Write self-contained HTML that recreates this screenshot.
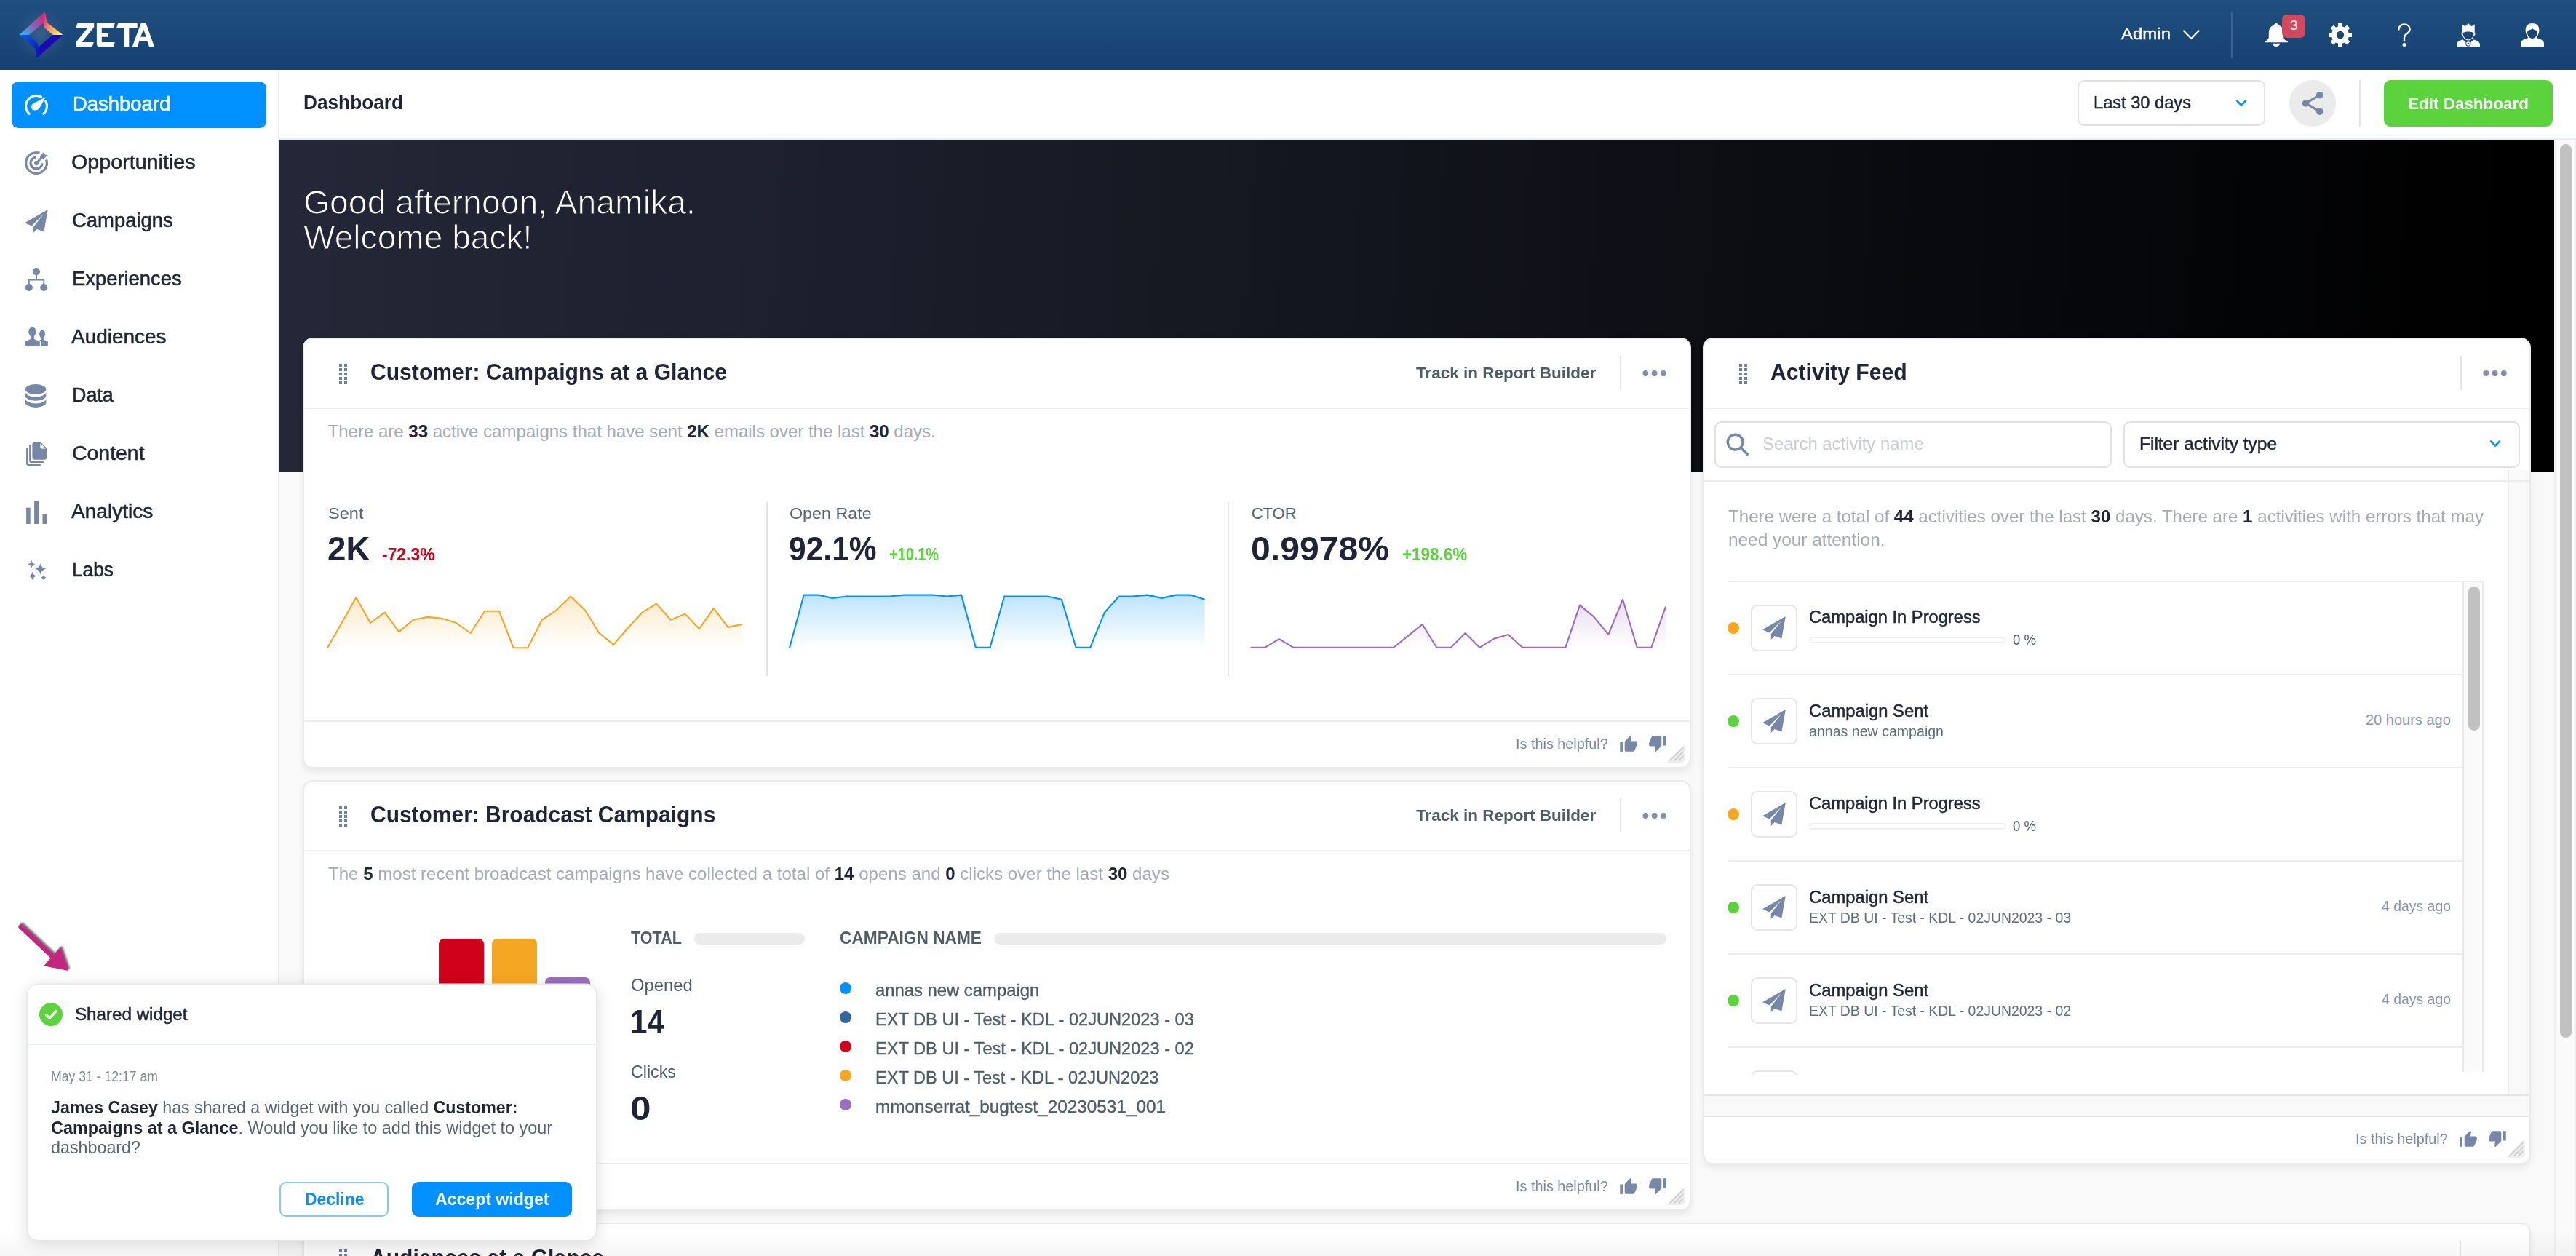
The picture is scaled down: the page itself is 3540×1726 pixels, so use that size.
<!DOCTYPE html>
<html><head><meta charset="utf-8"><title>Dashboard</title>
<style>
html,body{margin:0;padding:0;width:3540px;height:1726px;overflow:hidden}
body{position:relative;background:#f9f9f9;font-family:"Liberation Sans",sans-serif}
#root{position:absolute;left:0;top:0;width:3540px;height:1726px;overflow:hidden;background:#f9f9f9}
.t{position:absolute;white-space:nowrap;transform-origin:0 0}
.a{position:absolute}
.card{position:absolute;box-sizing:border-box;background:#fff;border-radius:14px;border:2px solid #ebebeb;box-shadow:0 5px 9px rgba(0,0,0,.07)}
.hl{position:absolute;height:2px;background:#ededed}
.vl{position:absolute;width:2px;background:#e6e6e6}
.dot{position:absolute;border-radius:50%}
svg{position:absolute;overflow:visible}
</style></head><body><div id="root">

<div class="a" style="left:0;top:96px;width:382px;height:1630px;background:#fff"></div>
<div class="a" style="left:382px;top:96px;width:2px;height:1630px;background:#efefef"></div>
<div class="a" style="left:384px;top:192px;width:3126px;height:456px;background:linear-gradient(93deg,#232737 0%,#1c1f2b 25%,#12141c 50%,#08090d 75%,#000 97%)"></div>
<div class="a" style="left:384px;top:96px;width:3156px;height:93px;background:#fff"></div>
<div class="a" style="left:384px;top:189px;width:3156px;height:3px;background:#eaeef0"></div>
<div class="a" style="left:3510px;top:192px;width:30px;height:1534px;background:#fafafa;box-shadow:inset 2px 0 0 #f0f0f0,inset -2px 0 0 #f0f0f0"></div>
<div class="a" style="left:3518px;top:198px;width:16px;height:1228px;background:#c1c1c1;border-radius:8px"></div>
<div class="a" style="left:0;top:0;width:3540px;height:96px;background:linear-gradient(180deg,#20507f 0%,#1a4878 50%,#164172 100%)"></div>
<svg style="left:0;top:0" width="240" height="96" viewBox="0 0 240 96">
<defs>
<linearGradient id="lg1" x1="26" y1="47" x2="62" y2="25" gradientUnits="userSpaceOnUse"><stop offset="0" stop-color="#17c6ff"/><stop offset=".55" stop-color="#8a62b0"/><stop offset="1" stop-color="#d5267c"/></linearGradient>
<linearGradient id="lg2" x1="60" y1="28" x2="84" y2="47" gradientUnits="userSpaceOnUse"><stop offset="0" stop-color="#e03f74"/><stop offset=".5" stop-color="#f0a566"/><stop offset="1" stop-color="#fffa55"/></linearGradient>
<linearGradient id="lg3" x1="27" y1="48" x2="52" y2="72" gradientUnits="userSpaceOnUse"><stop offset="0" stop-color="#0d63d8"/><stop offset="1" stop-color="#0a17c2"/></linearGradient>
<radialGradient id="lgg" cx="56" cy="48" r="36" gradientUnits="userSpaceOnUse"><stop offset="0" stop-color="#5a7fa6" stop-opacity=".42"/><stop offset=".6" stop-color="#4f7298" stop-opacity=".2"/><stop offset="1" stop-color="#4f7298" stop-opacity="0"/></radialGradient>
</defs>
<circle cx="56" cy="48" r="36" fill="url(#lgg)"/>
<polygon points="26.4,47.9 61.7,15.9 59.5,31.4 40,47.9" fill="url(#lg1)"/>
<polygon points="61.7,15.9 64.7,30.8 86.4,47.9 73,47.9 60.8,38.1 59.5,31.4" fill="url(#lg2)"/>
<polygon points="86.4,47.9 50.6,79.7 53,64.8 72.2,47.9" fill="#1a0ab3"/>
<polygon points="26.4,47.9 40,47.9 51.4,58.9 53,64.8 50.6,79.7 48.1,66.3" fill="url(#lg3)"/>
<g fill="#fff">
<polygon points="106.4,31.9 129.2,31.9 129.2,37.3 112.5,57.9 128.8,57.9 126.8,64 104,64 104,58.5 120.7,38.1 104.4,38.1"/>
<path d="M132.9,31.9 H157.8 L155.7,38.1 H139.8 V45.1 H149.6 L148,50.8 H139.8 V57.9 H157.8 L155.7,64 H136.5 Q132.9,64 132.9,60.4 Z"/>
<polygon points="162.3,31.9 188.7,31.9 188.7,38.1 177.3,38.1 177.3,64 170.4,64 170.4,38.1 160.2,38.1"/>
<path d="M193.6,31.9 H200.6 L212,64 H205 L202.6,56.9 H191.2 L188.8,64 H181.8 Z M197.1,40.6 L193.2,50.8 H200.9 Z"/>
</g></svg>
<div class="t" style="left:2915.00px;top:35.75px;font-size:22.5px;line-height:22.5px;-webkit-text-stroke:0.4px;transform:scaleX(1.0661);"><span style="color:#fff;">Admin</span></div>
<svg style="left:2998px;top:38px" width="28" height="20" viewBox="0 0 28 20"><polyline points="3,4.5 13.3,15 23.6,4.5" fill="none" stroke="#fff" stroke-width="2.2" stroke-linecap="round" stroke-linejoin="round"/></svg>
<div class="a" style="left:3066px;top:16px;width:2px;height:64px;background:#3d648f"></div>
<svg style="left:3112px;top:32px" width="32" height="32" viewBox="0 0 32 32"><path fill="#fff" d="M16,0 C17.6,0 18.7,1 19,2.4 C23.6,3.8 26.2,7.8 26.2,12.6 V19 C26.2,21.6 28.6,23.6 32,25.2 V26.2 H0 V25.2 C3.4,23.6 5.8,21.6 5.8,19 V12.6 C5.8,7.8 8.4,3.8 13,2.4 C13.3,1 14.4,0 16,0 Z"/><path fill="#fff" d="M11,27.8 H21 C21,30.2 18.8,32 16,32 C13.2,32 11,30.2 11,27.8 Z"/></svg>
<div class="a" style="left:3136px;top:20px;width:32px;height:32px;border-radius:7px;background:#d1495c"></div>
<div class="t" style="left:3146.60px;top:25.56px;font-size:18px;line-height:18px;transform:scaleX(1.0583);"><span style="color:#fff;">3</span></div>
<svg style="left:3200px;top:32px" width="32" height="32" viewBox="-16 -16 32 32"><g fill="#fff">
<rect x="-3" y="-16" width="6" height="32"/><rect x="-3" y="-16" width="6" height="32" transform="rotate(45)"/><rect x="-3" y="-16" width="6" height="32" transform="rotate(90)"/><rect x="-3" y="-16" width="6" height="32" transform="rotate(135)"/>
<circle r="12"/></g><circle r="5.2" fill="#1a4574"/></svg>
<svg style="left:3294px;top:32px" width="20" height="32" viewBox="0 0 20 32"><path d="M2.4,8.6 C2.4,4.4 5.6,1.4 10,1.4 C14.4,1.4 17.6,4.2 17.6,8.2 C17.6,11.2 15.8,12.8 13.6,14.2 C11.4,15.6 10,16.8 10,19.4 V24" fill="none" stroke="#fff" stroke-width="2.4" stroke-linecap="round"/><circle cx="10" cy="29.4" r="2.5" fill="#fff"/></svg>
<svg style="left:3376px;top:32px" width="32" height="32" viewBox="0 0 32 32"><g fill="#fff">
<path d="M7.3,1.5 L11.6,4.2 L16,0 L20.4,4.2 L24.7,1.5 V15 H7.3 Z"/>
<path d="M6.5,14.5 C6.5,13 7.3,12.7 7.3,12.7 H24.7 C24.7,12.7 25.5,13 25.5,14.5 C25.5,16 24.3,17 23.6,17.6 C22.8,20.4 19.8,23.6 16,23.6 C12.2,23.6 9.2,20.4 8.4,17.6 C7.7,17 6.5,16 6.5,14.5 Z"/>
<path d="M0,32 V29.5 C0,25.5 3.5,23.4 8.6,22.4 L16,29 L23.4,22.4 C28.5,23.4 32,25.5 32,29.5 V32 Z"/>
</g>
<path d="M8.6,14.2 C8.6,12.6 12,11.6 16,11.6 C20,11.6 23.4,12.6 23.4,14.2 C23.4,18 20,22.4 16,22.4 C12,22.4 8.6,18 8.6,14.2 Z" fill="#1a4574"/>
<path d="M9.2,21.6 L16,27.6 L22.8,21.6" fill="none" stroke="#1a4574" stroke-width="1.3"/>
<circle cx="15.9" cy="28" r="3.7" fill="#1a4574"/><circle cx="15.9" cy="28" r="2.75" fill="#fff"/><circle cx="15.9" cy="28" r="1.3" fill="#1a4574"/></svg>
<svg style="left:3464px;top:32px" width="32" height="32" viewBox="0 0 32 32"><g fill="#fff">
<path d="M6.6,9.4 C6.6,3 10.6,0 16,0 C21.4,0 25.4,3 25.4,9.4 C25.4,11.4 25,13.4 24.2,15 C23.6,17.8 20.8,22.4 16,22.4 C11.2,22.4 8.4,17.8 7.8,15 C7,13.4 6.6,11.4 6.6,9.4 Z"/>
<path d="M0,32 V27.6 C0,23.8 4,21.6 11.6,19.8 L16,22 L20.4,19.8 C28,21.6 32,23.8 32,27.6 V32 Z"/></g>
<path d="M9,12.6 C9,10.4 11,9.4 13,9 C14.6,8.6 15.4,7.4 16,7.2 C16.6,7.4 17.4,8.6 19,9 C21,9.4 23,10.4 23,12.6 C23,16.6 20,21 16,21 C12,21 9,16.6 9,12.6 Z" fill="#1a4574"/></svg>
<div class="t" style="left:417.00px;top:126.70px;font-size:28px;line-height:28px;transform:scaleX(0.9368);"><span style="color:#1f2537;font-weight:700;">Dashboard</span></div>
<div class="a" style="left:2854.6px;top:110px;width:254.5px;height:59.4px;border:2px solid #e1e2e3;border-radius:9px;background:#fff"></div>
<div class="t" style="left:2877.00px;top:129.28px;font-size:24px;line-height:24px;-webkit-text-stroke:0.5px;transform:scaleX(0.9846);"><span style="color:#1f2537;">Last 30 days</span></div>
<svg style="left:3070px;top:134px" width="20" height="16" viewBox="0 0 20 16"><polyline points="4,4.4 10,10.6 16,4.4" fill="none" stroke="#0091ff" stroke-width="2.6" stroke-linecap="round" stroke-linejoin="round"/></svg>
<div class="dot" style="left:3146px;top:110px;width:64px;height:64px;background:#ebebeb"></div>
<svg style="left:3146px;top:110px" width="64" height="64" viewBox="0 0 64 64"><g stroke="#7687a8" stroke-width="3" fill="none"><line x1="22.6" y1="31.9" x2="41.8" y2="20.7"/><line x1="22.6" y1="31.9" x2="41.8" y2="43.1"/></g><g fill="#7687a8"><circle cx="41.8" cy="20.7" r="4.8"/><circle cx="22.6" cy="31.9" r="4.8"/><circle cx="41.8" cy="43.1" r="4.8"/></g></svg>
<div class="a" style="left:3242px;top:110px;width:2px;height:64px;background:#e6e6e6"></div>
<div class="a" style="left:3276px;top:110px;width:232px;height:64px;border-radius:9px;background:#5bd33d"></div>
<div class="t" style="left:3309.00px;top:132.07px;font-size:22.6px;line-height:22.6px;transform:scaleX(0.9942);"><span style="color:#fff;font-weight:700;">Edit Dashboard</span></div>
<div class="a" style="left:16px;top:112px;width:350px;height:64px;border-radius:9px;background:#0091ff"></div>
<div class="t" style="left:99.50px;top:129.74px;font-size:27px;line-height:27px;-webkit-text-stroke:0.55px;transform:scaleX(1.0167);"><span style="color:#fff;">Dashboard</span></div>
<div class="t" style="left:98.20px;top:209.74px;font-size:27px;line-height:27px;-webkit-text-stroke:0.55px;transform:scaleX(1.0617);"><span style="color:#1f2537;">Opportunities</span></div>
<div class="t" style="left:98.80px;top:289.74px;font-size:27px;line-height:27px;-webkit-text-stroke:0.55px;transform:scaleX(1.0163);"><span style="color:#1f2537;">Campaigns</span></div>
<div class="t" style="left:98.80px;top:369.74px;font-size:27px;line-height:27px;-webkit-text-stroke:0.55px;transform:scaleX(1.0142);"><span style="color:#1f2537;">Experiences</span></div>
<div class="t" style="left:98.20px;top:449.74px;font-size:27px;line-height:27px;-webkit-text-stroke:0.55px;transform:scaleX(1.0349);"><span style="color:#1f2537;">Audiences</span></div>
<div class="t" style="left:98.80px;top:529.74px;font-size:27px;line-height:27px;-webkit-text-stroke:0.55px;transform:scaleX(0.9957);"><span style="color:#1f2537;">Data</span></div>
<div class="t" style="left:98.80px;top:609.74px;font-size:27px;line-height:27px;-webkit-text-stroke:0.55px;transform:scaleX(1.0531);"><span style="color:#1f2537;">Content</span></div>
<div class="t" style="left:98.20px;top:689.74px;font-size:27px;line-height:27px;-webkit-text-stroke:0.55px;transform:scaleX(1.0403);"><span style="color:#1f2537;">Analytics</span></div>
<div class="t" style="left:98.80px;top:769.74px;font-size:27px;line-height:27px;-webkit-text-stroke:0.55px;transform:scaleX(0.9699);"><span style="color:#1f2537;">Labs</span></div>
<svg style="left:34px;top:128px" width="32" height="32" viewBox="0 0 32 32" fill="#fff" stroke="none"><path d="M6.15,28.43 A14.45,14.45 0 0 1 22.78,5.1 M28.64,10.86 A14.45,14.45 0 0 1 25.86,28.43" fill="none" stroke="#fff" stroke-width="3.1" stroke-linecap="round"/><path d="M28.8,5.2 L12.6,13.7 C9.6,15 8.3,17.8 8.9,20 C9.7,22.7 12.6,23.9 15.2,23.5 C17.8,23.1 19.6,21.6 20.8,19.4 Z" fill="#fff"/></svg>
<svg style="left:34px;top:208px" width="32" height="32" viewBox="0 0 32 32" fill="#7687a8" stroke="none"><path d="M29.64,11.38 A14.4,14.4 0 1 1 20.57,2.34" fill="none" stroke="#7687a8" stroke-width="3.2"/><path d="M23.99,16.42 A8,8 0 1 1 15.86,8" fill="none" stroke="#7687a8" stroke-width="3.25"/><circle cx="16" cy="16.1" r="3.1"/><path d="M16,16 L24,8" stroke="#7687a8" stroke-width="3" fill="none"/><polygon points="21,6.7 26.5,0.6 27.3,4.3 31.3,5.2 25.4,11 22.4,10.6 21.2,9.4"/></svg>
<svg style="left:34px;top:288px" width="32" height="32" viewBox="0 0 32 32" fill="#7687a8" stroke="none"><path d="M31.8,0 L0,18.3 L9.6,22.4 L26.5,5.6 L11.8,24.2 L11.8,32 L16.8,26.9 L26.4,30.4 Z"/></svg>
<svg style="left:34px;top:368px" width="32" height="32" viewBox="0 0 32 32" fill="#7687a8" stroke="none"><circle cx="15.9" cy="5.2" r="5.1"/><circle cx="5.8" cy="27" r="5.1"/><circle cx="26.2" cy="27" r="5.1"/><path d="M15.9,9 V16.4 M5.8,23 V16.4 H26.2 V23" fill="none" stroke="#7687a8" stroke-width="2"/></svg>
<svg style="left:34px;top:448px" width="32" height="32" viewBox="0 0 32 32" fill="#7687a8" stroke="none"><path d="M0.1,27.9 V21.4 L8,18 V14.2 C6.6,13 5.9,11 5.8,9.6 C5,9.2 5,7.8 5.6,7.2 C5.2,4 7.4,2 10.4,2 C13.6,2 15.8,4 15.2,7.2 C15.8,7.8 15.8,9.2 15,9.6 C14.9,11 14.2,13 12.9,14.2 V18 L20.8,21.4 V27.9 Z"/><path d="M22.5,27.9 V20.6 L19.8,19.4 L22.3,18.75 V16.5 C21.2,15.6 20.6,14 20.5,12.8 C19.8,12.4 19.8,11.2 20.3,10.8 C20,8 21.8,6.1 23.8,6.1 C26.4,6.1 28.2,8 27.8,10.8 C28.3,11.2 28.3,12.4 27.6,12.8 C27.5,14 26.9,15.6 25.7,16.5 V18.75 L31.8,21.4 V27.9 Z"/></svg>
<svg style="left:34px;top:528px" width="32" height="32" viewBox="0 0 32 32" fill="#7687a8" stroke="none"><ellipse cx="15.1" cy="7" rx="14.25" ry="7"/><path d="M0.85,10.6 A14.25,7 0 0 0 29.35,10.6 V15.8 A14.25,7 0 0 1 0.85,15.8 Z"/><path d="M0.85,19.6 A14.25,7 0 0 0 29.35,19.6 V24.9 A14.25,7 0 0 1 0.85,24.9 Z"/></svg>
<svg style="left:34px;top:608px" width="32" height="32" viewBox="0 0 32 32" fill="#7687a8" stroke="none"><path d="M13.2,-0.2 H22 L30,7.8 V21 Q30,23.8 27.2,23.8 H13.2 Q10.4,23.8 10.4,21 V2.6 Q10.4,-0.2 13.2,-0.2 Z"/><path d="M21.4,1 L28.8,8.4 H23.4 Q21.4,8.4 21.4,6.4 Z" fill="#fff"/><path d="M7.2,4 V25 Q7.2,26.8 9,26.8 H25.8" fill="none" stroke="#7687a8" stroke-width="2.2"/><path d="M3.2,8 V29 Q3.2,30.8 5,30.8 H21.8" fill="none" stroke="#7687a8" stroke-width="2.2"/></svg>
<svg style="left:34px;top:688px" width="32" height="32" viewBox="0 0 32 32" fill="#7687a8" stroke="none"><rect x="2.1" y="9.7" width="5.6" height="22.3"/><rect x="13.1" y="0" width="5.9" height="32"/><rect x="24.5" y="18.7" width="5.5" height="13.3"/></svg>
<svg style="left:34px;top:768px" width="32" height="32" viewBox="0 0 32 32" fill="#7687a8" stroke="none"><path d="M21.7,6.2 Q22.916,12.584 29.3,13.8 Q22.916,15.016 21.7,21.4 Q20.484,15.016 14.1,13.8 Q20.484,12.584 21.7,6.2 Z"/><path d="M9.3,1.9 Q10.164,6.436 14.7,7.3 Q10.164,8.164 9.3,12.7 Q8.436,8.164 3.9,7.3 Q8.436,6.436 9.3,1.9 Z"/><path d="M10.7,17.7 Q11.628,22.572 16.5,23.5 Q11.628,24.428 10.7,29.3 Q9.772,24.428 4.9,23.5 Q9.772,22.572 10.7,17.7 Z"/><path d="M25.9,21.8 Q26.524,25.076 29.8,25.7 Q26.524,26.324 25.9,29.6 Q25.276,26.324 22,25.7 Q25.276,25.076 25.9,21.8 Z"/></svg>
<div class="t" style="left:416.90px;top:254.64px;font-size:46.5px;line-height:46.5px;-webkit-text-stroke:1.1px #222636;transform:scaleX(0.9973);"><span style="color:#fff;">Good afternoon, Anamika.</span></div>
<div class="t" style="left:416.90px;top:302.64px;font-size:46.5px;line-height:46.5px;-webkit-text-stroke:1.1px #222636;transform:scaleX(0.9917);"><span style="color:#fff;">Welcome back!</span></div>
<div class="card" style="left:416px;top:464px;width:1908px;height:592px"></div>
<svg style="left:465.5px;top:500px" width="11" height="28" viewBox="0 0 11 28" fill="#6f7fa3"><rect x="0" y="0" width="4" height="4"/><rect x="7" y="0" width="4" height="4"/><rect x="0" y="6" width="4" height="4"/><rect x="7" y="6" width="4" height="4"/><rect x="0" y="12" width="4" height="4"/><rect x="7" y="12" width="4" height="4"/><rect x="0" y="18" width="4" height="4"/><rect x="7" y="18" width="4" height="4"/><rect x="0" y="24" width="4" height="4"/><rect x="7" y="24" width="4" height="4"/></svg>
<div class="t" style="left:509.00px;top:496.36px;font-size:31px;line-height:31px;transform:scaleX(0.9708);"><span style="color:#1f2537;font-weight:700;">Customer: Campaigns at a Glance</span></div>
<div class="hl" style="left:418px;top:560px;width:1904px"></div>
<div class="vl" style="left:2226px;top:489px;height:47px"></div>
<svg style="left:2256px;top:508px" width="36" height="10" viewBox="0 0 36 10" fill="#8591a9"><circle cx="5.4" cy="5" r="4"/><circle cx="17.6" cy="5" r="4"/><circle cx="29.8" cy="5" r="4"/></svg>
<div class="t" style="left:1945.70px;top:501.10px;font-size:22.8px;line-height:22.8px;transform:scaleX(0.9859);"><span style="color:#4d5d66;font-weight:700;">Track in Report Builder</span></div>
<div class="t" style="left:450.60px;top:581.38px;font-size:24px;line-height:24px;"><span style="color:#a4aab6;">There are </span><span style="color:#1f2537;font-weight:700;">33</span><span style="color:#a4aab6;"> active campaigns that have sent </span><span style="color:#1f2537;font-weight:700;">2K</span><span style="color:#a4aab6;"> emails over the last </span><span style="color:#1f2537;font-weight:700;">30</span><span style="color:#a4aab6;"> days.</span></div>
<div class="vl" style="left:1053px;top:690px;height:239px"></div>
<div class="vl" style="left:1687px;top:690px;height:239px"></div>
<div class="t" style="left:450.50px;top:694.78px;font-size:22px;line-height:22px;transform:scaleX(1.0715);"><span style="color:#54646c;">Sent</span></div>
<div class="t" style="left:1085.00px;top:694.78px;font-size:22px;line-height:22px;transform:scaleX(1.0591);"><span style="color:#54646c;">Open Rate</span></div>
<div class="t" style="left:1719.70px;top:694.78px;font-size:22px;line-height:22px;"><span style="color:#54646c;">CTOR</span></div>
<div class="t" style="left:449.50px;top:731.24px;font-size:46.5px;line-height:46.5px;transform:scaleX(0.9840);"><span style="color:#1f2537;font-weight:700;">2K</span></div>
<div class="t" style="left:1084.00px;top:731.24px;font-size:46.5px;line-height:46.5px;transform:scaleX(0.9154);"><span style="color:#1f2537;font-weight:700;">92.1%</span></div>
<div class="t" style="left:1718.70px;top:731.24px;font-size:46.5px;line-height:46.5px;transform:scaleX(1.0350);"><span style="color:#1f2537;font-weight:700;">0.9978%</span></div>
<div class="t" style="left:525.40px;top:750.28px;font-size:24px;line-height:24px;transform:scaleX(0.9547);"><span style="color:#d0021b;font-weight:700;">-72.3%</span></div>
<div class="t" style="left:1222.00px;top:750.28px;font-size:24px;line-height:24px;transform:scaleX(0.8285);"><span style="color:#5bd33d;font-weight:700;">+10.1%</span></div>
<div class="t" style="left:1926.60px;top:750.28px;font-size:24px;line-height:24px;transform:scaleX(0.9358);"><span style="color:#5bd33d;font-weight:700;">+198.6%</span></div>
<svg style="left:0;top:0" width="3540" height="1000" viewBox="0 0 3540 1000"><defs><linearGradient id="g1" x1="0" y1="819" x2="0" y2="891" gradientUnits="userSpaceOnUse"><stop offset="0" stop-color="#f5a623" stop-opacity=".25"/><stop offset="1" stop-color="#f5a623" stop-opacity="0"/></linearGradient></defs><path d="M450.0,891 L450.0,890.2 L469.7,855.7 L489.3,821.1 L509.0,856.0 L528.6,841.7 L548.3,868.1 L567.9,851.8 L587.6,847.9 L607.2,849.8 L626.9,856.0 L646.6,870.0 L666.2,839.7 L685.9,839.7 L705.5,890.2 L725.2,890.2 L744.8,851.8 L764.5,838.6 L784.1,819.5 L803.8,838.2 L823.4,870.0 L843.1,885.9 L862.8,863.0 L882.4,841.7 L902.1,829.6 L921.7,851.8 L941.4,843.6 L961.0,864.2 L980.7,835.9 L1000.3,861.9 L1020.0,858.0 L1020.0,891 Z" fill="url(#g1)"/><polyline points="450.0,890.2 469.7,855.7 489.3,821.1 509.0,856.0 528.6,841.7 548.3,868.1 567.9,851.8 587.6,847.9 607.2,849.8 626.9,856.0 646.6,870.0 666.2,839.7 685.9,839.7 705.5,890.2 725.2,890.2 744.8,851.8 764.5,838.6 784.1,819.5 803.8,838.2 823.4,870.0 843.1,885.9 862.8,863.0 882.4,841.7 902.1,829.6 921.7,851.8 941.4,843.6 961.0,864.2 980.7,835.9 1000.3,861.9 1020.0,858.0" fill="none" stroke="#f5a623" stroke-width="2.1" stroke-linejoin="round"/></svg>
<svg style="left:0;top:0" width="3540" height="1000" viewBox="0 0 3540 1000"><defs><linearGradient id="g2" x1="0" y1="819" x2="0" y2="891" gradientUnits="userSpaceOnUse"><stop offset="0" stop-color="#0091ff" stop-opacity=".25"/><stop offset="1" stop-color="#0091ff" stop-opacity="0"/></linearGradient></defs><path d="M1085.0,891 L1085.0,890.2 L1104.7,817.6 L1124.4,817.6 L1144.0,821.9 L1163.7,819.5 L1183.4,819.5 L1203.1,819.5 L1222.7,819.5 L1242.4,817.6 L1262.1,817.6 L1281.8,817.6 L1301.4,819.5 L1321.1,817.6 L1340.8,889.8 L1360.5,889.8 L1380.1,819.5 L1399.8,819.5 L1419.5,819.5 L1439.2,819.5 L1458.8,823.8 L1478.5,889.8 L1498.2,889.8 L1517.9,841.7 L1537.5,819.5 L1557.2,819.5 L1576.9,817.6 L1596.6,821.9 L1616.2,817.6 L1635.9,817.6 L1655.6,823.8 L1655.6,891 Z" fill="url(#g2)"/><polyline points="1085.0,890.2 1104.7,817.6 1124.4,817.6 1144.0,821.9 1163.7,819.5 1183.4,819.5 1203.1,819.5 1222.7,819.5 1242.4,817.6 1262.1,817.6 1281.8,817.6 1301.4,819.5 1321.1,817.6 1340.8,889.8 1360.5,889.8 1380.1,819.5 1399.8,819.5 1419.5,819.5 1439.2,819.5 1458.8,823.8 1478.5,889.8 1498.2,889.8 1517.9,841.7 1537.5,819.5 1557.2,819.5 1576.9,817.6 1596.6,821.9 1616.2,817.6 1635.9,817.6 1655.6,823.8" fill="none" stroke="#0091ff" stroke-width="2.1" stroke-linejoin="round"/></svg>
<svg style="left:0;top:0" width="3540" height="1000" viewBox="0 0 3540 1000"><defs><linearGradient id="g3" x1="0" y1="819" x2="0" y2="891" gradientUnits="userSpaceOnUse"><stop offset="0" stop-color="#9b6bc4" stop-opacity=".25"/><stop offset="1" stop-color="#9b6bc4" stop-opacity="0"/></linearGradient></defs><path d="M1718.5,891 L1718.5,889.8 L1738.2,889.8 L1757.8,878.2 L1777.5,889.8 L1797.2,889.8 L1816.9,889.8 L1836.5,889.8 L1856.2,889.8 L1875.9,889.8 L1895.6,889.8 L1915.2,889.8 L1934.9,873.9 L1954.6,858.0 L1974.2,889.8 L1993.9,889.8 L2013.6,870.0 L2033.3,889.8 L2052.9,877.8 L2072.6,872.0 L2092.3,889.8 L2111.9,889.8 L2131.6,889.8 L2151.3,889.8 L2171.0,831.6 L2190.6,847.9 L2210.3,872.0 L2230.0,823.8 L2249.7,889.8 L2269.3,889.8 L2289.0,833.5 L2289.0,891 Z" fill="url(#g3)"/><polyline points="1718.5,889.8 1738.2,889.8 1757.8,878.2 1777.5,889.8 1797.2,889.8 1816.9,889.8 1836.5,889.8 1856.2,889.8 1875.9,889.8 1895.6,889.8 1915.2,889.8 1934.9,873.9 1954.6,858.0 1974.2,889.8 1993.9,889.8 2013.6,870.0 2033.3,889.8 2052.9,877.8 2072.6,872.0 2092.3,889.8 2111.9,889.8 2131.6,889.8 2151.3,889.8 2171.0,831.6 2190.6,847.9 2210.3,872.0 2230.0,823.8 2249.7,889.8 2269.3,889.8 2289.0,833.5" fill="none" stroke="#9b6bc4" stroke-width="2.1" stroke-linejoin="round"/></svg>
<div class="hl" style="left:418px;top:990px;width:1904px"></div>
<div class="t" style="left:2083.00px;top:1011.67px;font-size:20px;line-height:20px;transform:scaleX(0.9917);"><span style="color:#7a88a3;">Is this helpful?</span></div>
<svg style="left:2226px;top:1011.2px" width="24" height="22" viewBox="0 0 24 22" fill="#7687a8"><rect x="0.25" y="8.45" width="3.8" height="13.35"/><path d="M6.7,9 Q6.7,8 7.4,7.3 L14,0.4 Q14.8,-0.3 15.5,0.6 Q16.2,1.4 15.9,2.4 L14.8,7.5 H21.7 Q24,7.5 23.9,9.8 L23.7,12.5 L20.2,20.6 Q19.6,21.8 18.4,21.8 H8.6 Q6.7,21.8 6.7,19.9 Z"/></svg>
<svg style="left:2266px;top:1010.6px" width="24" height="22" viewBox="0 0 24 22" fill="#7687a8"><g transform="rotate(180 12 11)"><rect x="0.25" y="8.45" width="3.8" height="13.35"/><path d="M6.7,9 Q6.7,8 7.4,7.3 L14,0.4 Q14.8,-0.3 15.5,0.6 Q16.2,1.4 15.9,2.4 L14.8,7.5 H21.7 Q24,7.5 23.9,9.8 L23.7,12.5 L20.2,20.6 Q19.6,21.8 18.4,21.8 H8.6 Q6.7,21.8 6.7,19.9 Z"/></g></svg>
<svg style="left:2291.2px;top:1023.4px" width="25" height="25" viewBox="0 0 24.6 24.4"><path d="M24.6,2 V18 Q24.6,24.4 18,24.4 H2 Q-1,24.4 1.2,22.2 L22.4,1.2 Q24.6,-1 24.6,2 Z" fill="#ededed"/><g stroke="#c9c9c9" stroke-width="1.5" stroke-linecap="round"><line x1="4.3" y1="21.3" x2="21.5" y2="4.1"/><line x1="10.3" y1="21.3" x2="21.5" y2="10"/><line x1="16.2" y1="21.3" x2="21.5" y2="16"/></g></svg>
<div class="card" style="left:416px;top:1072px;width:1908px;height:592px"></div>
<svg style="left:465.5px;top:1108px" width="11" height="28" viewBox="0 0 11 28" fill="#6f7fa3"><rect x="0" y="0" width="4" height="4"/><rect x="7" y="0" width="4" height="4"/><rect x="0" y="6" width="4" height="4"/><rect x="7" y="6" width="4" height="4"/><rect x="0" y="12" width="4" height="4"/><rect x="7" y="12" width="4" height="4"/><rect x="0" y="18" width="4" height="4"/><rect x="7" y="18" width="4" height="4"/><rect x="0" y="24" width="4" height="4"/><rect x="7" y="24" width="4" height="4"/></svg>
<div class="t" style="left:509.00px;top:1104.36px;font-size:31px;line-height:31px;transform:scaleX(0.9661);"><span style="color:#1f2537;font-weight:700;">Customer: Broadcast Campaigns</span></div>
<div class="hl" style="left:418px;top:1168px;width:1904px"></div>
<div class="vl" style="left:2226px;top:1097px;height:47px"></div>
<svg style="left:2256px;top:1116px" width="36" height="10" viewBox="0 0 36 10" fill="#8591a9"><circle cx="5.4" cy="5" r="4"/><circle cx="17.6" cy="5" r="4"/><circle cx="29.8" cy="5" r="4"/></svg>
<div class="t" style="left:1945.70px;top:1109.10px;font-size:22.8px;line-height:22.8px;transform:scaleX(0.9859);"><span style="color:#4d5d66;font-weight:700;">Track in Report Builder</span></div>
<div class="t" style="left:450.50px;top:1189.38px;font-size:24px;line-height:24px;transform:scaleX(1.0028);"><span style="color:#a4aab6;">The </span><span style="color:#1f2537;font-weight:700;">5</span><span style="color:#a4aab6;"> most recent broadcast campaigns have collected a total of </span><span style="color:#1f2537;font-weight:700;">14</span><span style="color:#a4aab6;"> opens and </span><span style="color:#1f2537;font-weight:700;">0</span><span style="color:#a4aab6;"> clicks over the last </span><span style="color:#1f2537;font-weight:700;">30</span><span style="color:#a4aab6;"> days</span></div>
<div class="a" style="left:602.6px;top:1290px;width:62.4px;height:280px;border-radius:7px 7px 0 0;background:#d0021b"></div>
<div class="a" style="left:675.6px;top:1290px;width:62.2px;height:280px;border-radius:7px 7px 0 0;background:#f5a623"></div>
<div class="a" style="left:748.6px;top:1343px;width:62.2px;height:227px;border-radius:7px 7px 0 0;background:#9b6fc0"></div>
<div class="t" style="left:867.00px;top:1277.08px;font-size:24px;line-height:24px;transform:scaleX(0.9001);"><span style="color:#4d5d66;font-weight:700;">TOTAL</span></div>
<div class="a" style="left:954px;top:1282px;width:152px;height:16px;border-radius:8px;background:#ebebeb"></div>
<div class="t" style="left:1154.00px;top:1277.08px;font-size:24px;line-height:24px;transform:scaleX(0.9456);"><span style="color:#4d5d66;font-weight:700;">CAMPAIGN NAME</span></div>
<div class="a" style="left:1366px;top:1282px;width:924px;height:16px;border-radius:8px;background:#ebebeb"></div>
<div class="t" style="left:866.80px;top:1342.28px;font-size:24px;line-height:24px;transform:scaleX(0.9906);"><span style="color:#4d5d66;">Opened</span></div>
<div class="t" style="left:865.80px;top:1380.66px;font-size:46px;line-height:46px;transform:scaleX(0.9185);"><span style="color:#1f2537;font-weight:700;">14</span></div>
<div class="t" style="left:866.80px;top:1461.48px;font-size:24px;line-height:24px;transform:scaleX(0.9688);"><span style="color:#4d5d66;">Clicks</span></div>
<div class="t" style="left:865.80px;top:1500.06px;font-size:46px;line-height:46px;transform:scaleX(1.1136);"><span style="color:#1f2537;font-weight:700;">0</span></div>
<div class="dot" style="left:1154px;top:1350px;width:16px;height:16px;background:#0091ff"></div>
<div class="t" style="left:1202.60px;top:1348.68px;font-size:24px;line-height:24px;-webkit-text-stroke:0.4px;transform:scaleX(0.9928);"><span style="color:#4d5d66;">annas new campaign</span></div>
<div class="dot" style="left:1154px;top:1390px;width:16px;height:16px;background:#34679f"></div>
<div class="t" style="left:1202.60px;top:1388.68px;font-size:24px;line-height:24px;-webkit-text-stroke:0.4px;transform:scaleX(0.9839);"><span style="color:#4d5d66;">EXT DB UI - Test - KDL - 02JUN2023 - 03</span></div>
<div class="dot" style="left:1154px;top:1430px;width:16px;height:16px;background:#d0021b"></div>
<div class="t" style="left:1202.60px;top:1428.68px;font-size:24px;line-height:24px;-webkit-text-stroke:0.4px;transform:scaleX(0.9839);"><span style="color:#4d5d66;">EXT DB UI - Test - KDL - 02JUN2023 - 02</span></div>
<div class="dot" style="left:1154px;top:1470px;width:16px;height:16px;background:#f5a623"></div>
<div class="t" style="left:1202.60px;top:1468.68px;font-size:24px;line-height:24px;-webkit-text-stroke:0.4px;transform:scaleX(0.9808);"><span style="color:#4d5d66;">EXT DB UI - Test - KDL - 02JUN2023</span></div>
<div class="dot" style="left:1154px;top:1510px;width:16px;height:16px;background:#9b6fc0"></div>
<div class="t" style="left:1202.60px;top:1508.68px;font-size:24px;line-height:24px;-webkit-text-stroke:0.4px;transform:scaleX(1.0137);"><span style="color:#4d5d66;">mmonserrat_bugtest_20230531_001</span></div>
<div class="hl" style="left:418px;top:1598px;width:1904px"></div>
<div class="t" style="left:2083.00px;top:1619.67px;font-size:20px;line-height:20px;transform:scaleX(0.9917);"><span style="color:#7a88a3;">Is this helpful?</span></div>
<svg style="left:2226px;top:1619.2px" width="24" height="22" viewBox="0 0 24 22" fill="#7687a8"><rect x="0.25" y="8.45" width="3.8" height="13.35"/><path d="M6.7,9 Q6.7,8 7.4,7.3 L14,0.4 Q14.8,-0.3 15.5,0.6 Q16.2,1.4 15.9,2.4 L14.8,7.5 H21.7 Q24,7.5 23.9,9.8 L23.7,12.5 L20.2,20.6 Q19.6,21.8 18.4,21.8 H8.6 Q6.7,21.8 6.7,19.9 Z"/></svg>
<svg style="left:2266px;top:1618.6px" width="24" height="22" viewBox="0 0 24 22" fill="#7687a8"><g transform="rotate(180 12 11)"><rect x="0.25" y="8.45" width="3.8" height="13.35"/><path d="M6.7,9 Q6.7,8 7.4,7.3 L14,0.4 Q14.8,-0.3 15.5,0.6 Q16.2,1.4 15.9,2.4 L14.8,7.5 H21.7 Q24,7.5 23.9,9.8 L23.7,12.5 L20.2,20.6 Q19.6,21.8 18.4,21.8 H8.6 Q6.7,21.8 6.7,19.9 Z"/></g></svg>
<svg style="left:2291.2px;top:1631.4px" width="25" height="25" viewBox="0 0 24.6 24.4"><path d="M24.6,2 V18 Q24.6,24.4 18,24.4 H2 Q-1,24.4 1.2,22.2 L22.4,1.2 Q24.6,-1 24.6,2 Z" fill="#ededed"/><g stroke="#c9c9c9" stroke-width="1.5" stroke-linecap="round"><line x1="4.3" y1="21.3" x2="21.5" y2="4.1"/><line x1="10.3" y1="21.3" x2="21.5" y2="10"/><line x1="16.2" y1="21.3" x2="21.5" y2="16"/></g></svg>
<div class="card" style="left:416px;top:1680px;width:3062px;height:200px"></div>
<svg style="left:465.5px;top:1717px" width="11" height="28" viewBox="0 0 11 28" fill="#6f7fa3"><rect x="0" y="0" width="4" height="4"/><rect x="7" y="0" width="4" height="4"/><rect x="0" y="6" width="4" height="4"/><rect x="7" y="6" width="4" height="4"/><rect x="0" y="12" width="4" height="4"/><rect x="7" y="12" width="4" height="4"/><rect x="0" y="18" width="4" height="4"/><rect x="7" y="18" width="4" height="4"/><rect x="0" y="24" width="4" height="4"/><rect x="7" y="24" width="4" height="4"/></svg>
<div class="t" style="left:509.00px;top:1713.36px;font-size:31px;line-height:31px;transform:scaleX(0.9703);"><span style="color:#1f2537;font-weight:700;">Audiences at a Glance</span></div>
<div class="vl" style="left:3380px;top:1706px;height:47px"></div>
<svg style="left:3410.4px;top:1725px" width="36" height="10" viewBox="0 0 36 10" fill="#8591a9"><circle cx="5.4" cy="5" r="4"/><circle cx="17.6" cy="5" r="4"/><circle cx="29.8" cy="5" r="4"/></svg>
<div class="card" style="left:2340px;top:464px;width:1138px;height:1136px"></div>
<svg style="left:2389.5px;top:500px" width="11" height="28" viewBox="0 0 11 28" fill="#6f7fa3"><rect x="0" y="0" width="4" height="4"/><rect x="7" y="0" width="4" height="4"/><rect x="0" y="6" width="4" height="4"/><rect x="7" y="6" width="4" height="4"/><rect x="0" y="12" width="4" height="4"/><rect x="7" y="12" width="4" height="4"/><rect x="0" y="18" width="4" height="4"/><rect x="7" y="18" width="4" height="4"/><rect x="0" y="24" width="4" height="4"/><rect x="7" y="24" width="4" height="4"/></svg>
<div class="t" style="left:2433.00px;top:496.36px;font-size:31px;line-height:31px;transform:scaleX(0.9733);"><span style="color:#1f2537;font-weight:700;">Activity Feed</span></div>
<div class="hl" style="left:2342px;top:560px;width:1135px"></div>
<div class="vl" style="left:3381px;top:489px;height:47px"></div>
<svg style="left:3411px;top:508px" width="36" height="10" viewBox="0 0 36 10" fill="#8591a9"><circle cx="5.4" cy="5" r="4"/><circle cx="17.6" cy="5" r="4"/><circle cx="29.8" cy="5" r="4"/></svg>
<div class="a" style="left:2356px;top:579px;width:542px;height:60px;border:2px solid #e1e2e3;border-radius:9px;background:#fff"></div>
<svg style="left:2372px;top:595px" width="32" height="32" viewBox="0 0 32 32"><circle cx="12.6" cy="12.6" r="10.4" fill="none" stroke="#7687a8" stroke-width="3.4"/><line x1="20.2" y1="20.2" x2="30.4" y2="30.4" stroke="#7687a8" stroke-width="3.6"/></svg>
<div class="t" style="left:2422.30px;top:598.28px;font-size:24px;line-height:24px;transform:scaleX(0.9952);"><span style="color:#cbcccf;">Search activity name</span></div>
<div class="a" style="left:2918px;top:579px;width:541px;height:60px;border:2px solid #e1e2e3;border-radius:9px;background:#fff"></div>
<div class="t" style="left:2940.00px;top:598.28px;font-size:24px;line-height:24px;-webkit-text-stroke:0.5px;transform:scaleX(1.0195);"><span style="color:#1f2537;">Filter activity type</span></div>
<svg style="left:3419px;top:602px" width="20" height="16" viewBox="0 0 20 16"><polyline points="4,4.4 10,10.6 16,4.4" fill="none" stroke="#0091ff" stroke-width="2.6" stroke-linecap="round" stroke-linejoin="round"/></svg>
<div class="a" style="left:3446.3px;top:646px;width:29.7px;height:858px;background:#f9f9f9;box-shadow:inset 2px 0 0 #ebebeb"></div>
<div class="hl" style="left:2342px;top:660px;width:1134px"></div>
<div class="a" style="left:2342px;top:1504px;width:1134px;height:29px;background:#f9f9f9;box-shadow:inset 0 2px 0 #e6e6e6"></div>
<div class="a" style="left:3447px;top:1504px;width:2px;height:2px;background:#e6e6e6"></div>
<div class="hl" style="left:2342px;top:1533px;width:1134px;background:#e6e6e6"></div>
<div class="t" style="left:2374.50px;top:698.18px;font-size:24px;line-height:24px;transform:scaleX(1.0045);"><span style="color:#a4aab6;">There were a total of </span><span style="color:#1f2537;font-weight:700;">44</span><span style="color:#a4aab6;"> activities over the last </span><span style="color:#1f2537;font-weight:700;">30</span><span style="color:#a4aab6;"> days. There are </span><span style="color:#1f2537;font-weight:700;">1</span><span style="color:#a4aab6;"> activities with errors that may</span></div>
<div class="t" style="left:2374.50px;top:729.98px;font-size:24px;line-height:24px;transform:scaleX(1.0158);"><span style="color:#a4aab6;">need your attention.</span></div>
<div class="hl" style="left:2374px;top:798px;width:1039px"></div>
<div class="a" style="left:3384px;top:800px;width:29px;height:673px;background:#fafafa;box-shadow:inset 2px 0 0 #e9e9e9,inset -2px 0 0 #e9e9e9"></div>
<div class="a" style="left:3392px;top:806px;width:16px;height:198px;border-radius:8px;background:#c1c1c1"></div>
<div class="dot" style="left:2374px;top:855px;width:16px;height:16px;background:#f5a623"></div>
<div class="a" style="left:2406px;top:831px;width:60px;height:60px;border:2px solid #e6e6e6;border-radius:9px;background:#fff"></div>
<svg style="left:2422px;top:847px" width="32" height="32" viewBox="0 0 32 32" fill="#7687a8"><path d="M31.8,0 L0,18.3 L9.6,22.4 L26.5,5.6 L11.8,24.2 L11.8,32 L16.8,26.9 L26.4,30.4 Z"/></svg>
<div class="t" style="left:2486.00px;top:837.23px;font-size:23px;line-height:23px;-webkit-text-stroke:0.5px;transform:scaleX(1.0295);"><span style="color:#1f2537;">Campaign In Progress</span></div>
<div class="a" style="left:2486px;top:874.5px;width:267px;height:5px;border:2px solid #eef0f0;border-radius:5px;background:#fff"></div>
<div class="t" style="left:2766.00px;top:868.67px;font-size:20px;line-height:20px;transform:scaleX(0.9284);"><span style="color:#4d5d66;">0 %</span></div>
<div class="hl" style="left:2374px;top:925.8px;width:1010px"></div>
<div class="dot" style="left:2374px;top:983px;width:16px;height:16px;background:#5bd33d"></div>
<div class="a" style="left:2406px;top:959px;width:60px;height:60px;border:2px solid #e6e6e6;border-radius:9px;background:#fff"></div>
<svg style="left:2422px;top:975px" width="32" height="32" viewBox="0 0 32 32" fill="#7687a8"><path d="M31.8,0 L0,18.3 L9.6,22.4 L26.5,5.6 L11.8,24.2 L11.8,32 L16.8,26.9 L26.4,30.4 Z"/></svg>
<div class="t" style="left:2486.00px;top:965.53px;font-size:23px;line-height:23px;-webkit-text-stroke:0.5px;transform:scaleX(1.0344);"><span style="color:#1f2537;">Campaign Sent</span></div>
<div class="t" style="left:2486.00px;top:995.47px;font-size:20px;line-height:20px;transform:scaleX(0.9788);"><span style="color:#5f6f77;">annas new campaign</span></div>
<div class="t" style="left:3251.00px;top:979.47px;font-size:20px;line-height:20px;"><span style="color:#8a94ad;">20 hours ago</span></div>
<div class="hl" style="left:2374px;top:1053.8px;width:1010px"></div>
<div class="dot" style="left:2374px;top:1111px;width:16px;height:16px;background:#f5a623"></div>
<div class="a" style="left:2406px;top:1087px;width:60px;height:60px;border:2px solid #e6e6e6;border-radius:9px;background:#fff"></div>
<svg style="left:2422px;top:1103px" width="32" height="32" viewBox="0 0 32 32" fill="#7687a8"><path d="M31.8,0 L0,18.3 L9.6,22.4 L26.5,5.6 L11.8,24.2 L11.8,32 L16.8,26.9 L26.4,30.4 Z"/></svg>
<div class="t" style="left:2486.00px;top:1093.23px;font-size:23px;line-height:23px;-webkit-text-stroke:0.5px;transform:scaleX(1.0295);"><span style="color:#1f2537;">Campaign In Progress</span></div>
<div class="a" style="left:2486px;top:1130.5px;width:267px;height:5px;border:2px solid #eef0f0;border-radius:5px;background:#fff"></div>
<div class="t" style="left:2766.00px;top:1124.67px;font-size:20px;line-height:20px;transform:scaleX(0.9284);"><span style="color:#4d5d66;">0 %</span></div>
<div class="hl" style="left:2374px;top:1181.8px;width:1010px"></div>
<div class="dot" style="left:2374px;top:1239px;width:16px;height:16px;background:#5bd33d"></div>
<div class="a" style="left:2406px;top:1215px;width:60px;height:60px;border:2px solid #e6e6e6;border-radius:9px;background:#fff"></div>
<svg style="left:2422px;top:1231px" width="32" height="32" viewBox="0 0 32 32" fill="#7687a8"><path d="M31.8,0 L0,18.3 L9.6,22.4 L26.5,5.6 L11.8,24.2 L11.8,32 L16.8,26.9 L26.4,30.4 Z"/></svg>
<div class="t" style="left:2486.00px;top:1221.53px;font-size:23px;line-height:23px;-webkit-text-stroke:0.5px;transform:scaleX(1.0344);"><span style="color:#1f2537;">Campaign Sent</span></div>
<div class="t" style="left:2486.00px;top:1251.47px;font-size:20px;line-height:20px;transform:scaleX(0.9706);"><span style="color:#5f6f77;">EXT DB UI - Test - KDL - 02JUN2023 - 03</span></div>
<div class="t" style="left:3272.60px;top:1235.47px;font-size:20px;line-height:20px;transform:scaleX(0.9708);"><span style="color:#8a94ad;">4 days ago</span></div>
<div class="hl" style="left:2374px;top:1309.8px;width:1010px"></div>
<div class="dot" style="left:2374px;top:1367px;width:16px;height:16px;background:#5bd33d"></div>
<div class="a" style="left:2406px;top:1343px;width:60px;height:60px;border:2px solid #e6e6e6;border-radius:9px;background:#fff"></div>
<svg style="left:2422px;top:1359px" width="32" height="32" viewBox="0 0 32 32" fill="#7687a8"><path d="M31.8,0 L0,18.3 L9.6,22.4 L26.5,5.6 L11.8,24.2 L11.8,32 L16.8,26.9 L26.4,30.4 Z"/></svg>
<div class="t" style="left:2486.00px;top:1349.53px;font-size:23px;line-height:23px;-webkit-text-stroke:0.5px;transform:scaleX(1.0344);"><span style="color:#1f2537;">Campaign Sent</span></div>
<div class="t" style="left:2486.00px;top:1379.47px;font-size:20px;line-height:20px;transform:scaleX(0.9706);"><span style="color:#5f6f77;">EXT DB UI - Test - KDL - 02JUN2023 - 02</span></div>
<div class="t" style="left:3272.60px;top:1363.47px;font-size:20px;line-height:20px;transform:scaleX(0.9708);"><span style="color:#8a94ad;">4 days ago</span></div>
<div class="hl" style="left:2374px;top:1437.8px;width:1010px"></div>
<div class="a" style="left:2406px;top:1471px;width:60px;height:20px;border:2px solid #e6e6e6;border-radius:9px;background:#fff;clip-path:inset(0 0 18px 0)"></div>
<div class="t" style="left:3237.00px;top:1554.67px;font-size:20px;line-height:20px;transform:scaleX(0.9917);"><span style="color:#7a88a3;">Is this helpful?</span></div>
<svg style="left:3380px;top:1554.2px" width="24" height="22" viewBox="0 0 24 22" fill="#7687a8"><rect x="0.25" y="8.45" width="3.8" height="13.35"/><path d="M6.7,9 Q6.7,8 7.4,7.3 L14,0.4 Q14.8,-0.3 15.5,0.6 Q16.2,1.4 15.9,2.4 L14.8,7.5 H21.7 Q24,7.5 23.9,9.8 L23.7,12.5 L20.2,20.6 Q19.6,21.8 18.4,21.8 H8.6 Q6.7,21.8 6.7,19.9 Z"/></svg>
<svg style="left:3420px;top:1553.6px" width="24" height="22" viewBox="0 0 24 22" fill="#7687a8"><g transform="rotate(180 12 11)"><rect x="0.25" y="8.45" width="3.8" height="13.35"/><path d="M6.7,9 Q6.7,8 7.4,7.3 L14,0.4 Q14.8,-0.3 15.5,0.6 Q16.2,1.4 15.9,2.4 L14.8,7.5 H21.7 Q24,7.5 23.9,9.8 L23.7,12.5 L20.2,20.6 Q19.6,21.8 18.4,21.8 H8.6 Q6.7,21.8 6.7,19.9 Z"/></g></svg>
<svg style="left:3445.2px;top:1566.4px" width="25" height="25" viewBox="0 0 24.6 24.4"><path d="M24.6,2 V18 Q24.6,24.4 18,24.4 H2 Q-1,24.4 1.2,22.2 L22.4,1.2 Q24.6,-1 24.6,2 Z" fill="#ededed"/><g stroke="#c9c9c9" stroke-width="1.5" stroke-linecap="round"><line x1="4.3" y1="21.3" x2="21.5" y2="4.1"/><line x1="10.3" y1="21.3" x2="21.5" y2="10"/><line x1="16.2" y1="21.3" x2="21.5" y2="16"/></g></svg>
<div class="a" style="left:37.5px;top:1353px;width:781px;height:350.5px;border-radius:14px;background:#fff;box-shadow:0 0 0 1.5px #e9e9e9,0 4px 22px rgba(0,0,0,.16)"></div>
<div class="dot" style="left:54px;top:1378px;width:32px;height:32px;background:#5bd33d"></div>
<svg style="left:54px;top:1378px" width="32" height="32" viewBox="0 0 32 32"><polyline points="9.4,16.6 14.2,21.2 23,11.6" fill="none" stroke="#fff" stroke-width="3.4" stroke-linecap="round" stroke-linejoin="round"/></svg>
<div class="t" style="left:102.50px;top:1382.73px;font-size:23px;line-height:23px;-webkit-text-stroke:0.5px;transform:scaleX(1.0507);"><span style="color:#1f2537;">Shared widget</span></div>
<div class="hl" style="left:38px;top:1434px;width:781px;background:#e7eded"></div>
<div class="t" style="left:70.40px;top:1469.47px;font-size:20px;line-height:20px;transform:scaleX(0.8816);"><span style="color:#7d8d93;">May 31 - 12:17 am</span></div>
<div class="t" style="left:70.40px;top:1509.68px;font-size:24px;line-height:24px;transform:scaleX(0.9654);"><span style="color:#1f2537;font-weight:700;">James Casey</span><span style="color:#55656d;"> has shared a widget with you called </span><span style="color:#1f2537;font-weight:700;">Customer:</span></div>
<div class="t" style="left:70.40px;top:1537.68px;font-size:24px;line-height:24px;transform:scaleX(0.9751);"><span style="color:#1f2537;font-weight:700;">Campaigns at a Glance</span><span style="color:#55656d;">. Would you like to add this widget to your</span></div>
<div class="t" style="left:70.40px;top:1565.28px;font-size:24px;line-height:24px;transform:scaleX(0.9702);"><span style="color:#55656d;">dashboard?</span></div>
<div class="a" style="left:384px;top:1624px;width:146px;height:44px;border:2px solid #85c8fb;border-radius:9px;background:#fff"></div>
<div class="t" style="left:418.60px;top:1635.68px;font-size:24px;line-height:24px;transform:scaleX(0.9534);"><span style="color:#0091ff;font-weight:700;">Decline</span></div>
<div class="a" style="left:566px;top:1624px;width:220px;height:48px;border-radius:9px;background:#0091ff"></div>
<div class="t" style="left:598.00px;top:1635.68px;font-size:24px;line-height:24px;transform:scaleX(0.9613);"><span style="color:#fff;font-weight:700;">Accept widget</span></div>
<svg style="left:0;top:1250px" width="130" height="110" viewBox="0 1250 130 110"><defs><filter id="ash" x="-30%" y="-30%" width="170%" height="170%"><feGaussianBlur in="SourceAlpha" stdDeviation="1.8"/><feOffset dx="1.6" dy="-1.8"/><feComponentTransfer><feFuncA type="linear" slope=".62"/></feComponentTransfer><feMerge><feMergeNode/><feMergeNode in="SourceGraphic"/></feMerge></filter></defs>
<g filter="url(#ash)"><line x1="28.9" y1="1273.6" x2="72" y2="1314.4" stroke="#c3267f" stroke-width="6.8" stroke-linecap="round"/><polygon points="61.2,1327 83.1,1302.1 93.8,1333.4" fill="#c3267f" stroke="#c3267f" stroke-width="1" stroke-linejoin="round"/></g></svg>
<div class="a" style="left:0;top:1690px;width:3540px;height:36px;background:linear-gradient(180deg,rgba(0,0,0,0),rgba(0,0,0,.035))"></div>
</div></body></html>
